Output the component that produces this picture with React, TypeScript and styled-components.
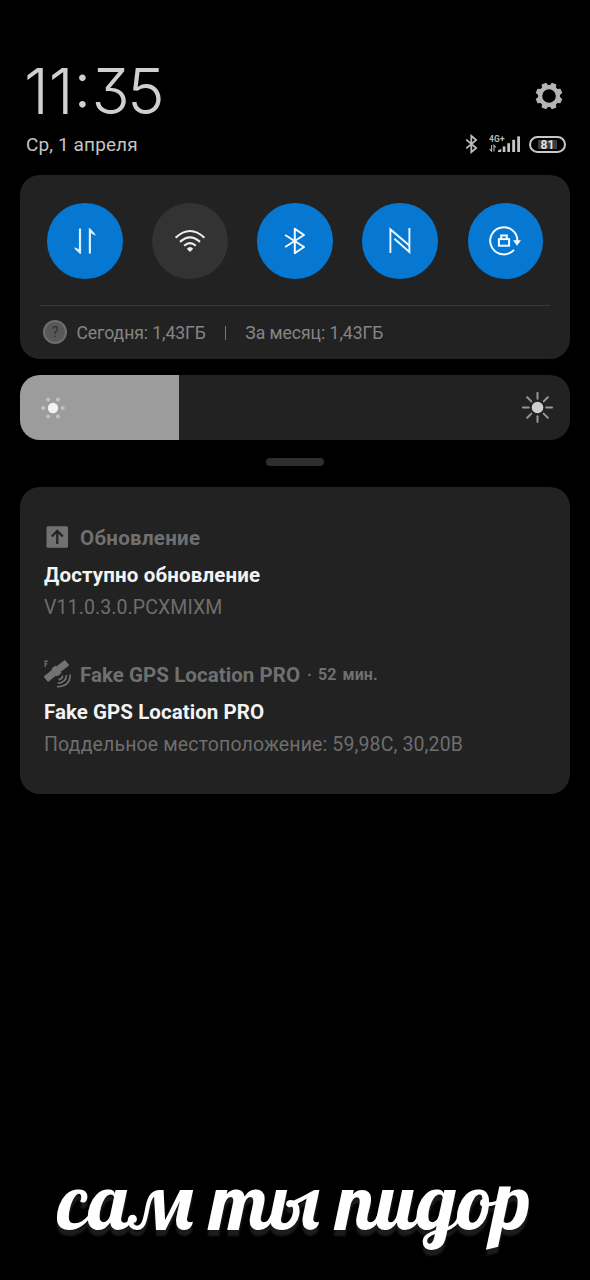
import React from 'react';
import styled, { createGlobalStyle } from 'styled-components';

const GlobalStyle = createGlobalStyle`
  * { box-sizing: border-box; }
  body { margin: 0; background: #000; }
  svg { display: block; flex: none; }
`;

const Screen = styled.main`
  width: 590px;
  height: 1280px;
  padding: 60px 20px 0;
  display: flex;
  flex-direction: column;
  overflow: hidden;
  background: #000;
  color: #c4c4c4;
  font-family: Roboto, "Liberation Sans", sans-serif;
`;

const Header = styled.header`
  height: 115px;
  padding: 0 4px 0 6px;
  display: flex;
  justify-content: space-between;
`;

const HeaderLeft = styled.div`
  display: flex;
  flex-direction: column;
`;

const HeaderRight = styled.div`
  display: flex;
  flex-direction: column;
  align-items: flex-end;
  padding-top: 22px;
`;

const Clock = styled.div`
  height: 62px;
  margin-left: -2px;
  font-family: Inter, Roboto, sans-serif;
  font-size: 63px;
  line-height: 62px;
  font-weight: 300;
  font-feature-settings: "cv09" 1;
  white-space: nowrap;
  color: #d0d0d0;
`;

const Digits = styled.span<{ $track: number }>`
  letter-spacing: ${p => p.$track}px;
`;

const DateText = styled.div`
  margin-top: 11px;
  font-size: 19px;
  line-height: 24px;
  letter-spacing: 0.12px;
  white-space: nowrap;
`;

const GearSlot = styled.div`
  margin-right: 3px;
`;

const StatusRow = styled.div`
  display: flex;
  align-items: center;
  height: 20px;
  margin-top: 24px;
`;

const Network = styled.div`
  width: 32px;
  margin: 0 8px 0 11px;
`;

const Battery = styled.div`
  width: 37px;
  height: 17px;
  padding: 2px 7px;
  border: 2px solid #c8c8c8;
  border-radius: 9px;
`;

const BatteryLevel = styled.div`
  height: 9px;
  background: #3c3c3c;
  color: #e2e2e2;
  font-size: 12px;
  line-height: 10px;
  font-weight: 700;
  text-align: center;
`;

const Panel = styled.section`
  height: 184px;
  padding: 28px 20px 0;
  border-radius: 20px;
  background: #222;
`;

const Toggles = styled.div`
  display: flex;
  justify-content: space-between;
  padding: 0 7px;
`;

const Toggle = styled.div<{ $on?: boolean }>`
  width: 75.5px;
  height: 75.5px;
  border-radius: 50%;
  display: flex;
  align-items: center;
  justify-content: center;
  background: ${p => (p.$on ? '#0678d1' : '#333')};
`;

const Usage = styled.div`
  display: flex;
  align-items: center;
  height: 53px;
  margin-top: 26.5px;
  padding-left: 3px;
  border-top: 1px solid #383838;
  color: #858585;
  font-size: 17.6px;
  white-space: nowrap;
`;

const UsageText = styled.span<{ $left: number; $track: number }>`
  margin-left: ${p => p.$left}px;
  padding-top: 1px;
  letter-spacing: ${p => p.$track}px;
`;

const Divider = styled.span`
  width: 1.5px;
  height: 14px;
  margin: 1px 0 0 19px;
  background: #777;
`;

const Brightness = styled.section`
  height: 65px;
  margin-top: 16px;
  display: flex;
  justify-content: space-between;
  align-items: center;
  padding-right: 17px;
  border-radius: 20px;
  overflow: hidden;
  background: #222;
`;

const BrightnessFill = styled.div`
  width: 159px;
  height: 100%;
  padding-left: 18.5px;
  display: flex;
  align-items: center;
  background: #9c9c9c;
`;

const Handle = styled.div`
  width: 58px;
  height: 8px;
  margin: 18px auto 21px;
  border-radius: 4px;
  background: #2e2e2e;
`;

const Notifications = styled.section`
  height: 307px;
  padding: 37px 24px 0;
  border-radius: 20px;
  background: #222;
`;

const Notice = styled.article`
  height: 137px;
  white-space: nowrap;
`;

const AppRow = styled.div`
  display: flex;
  align-items: center;
  height: 26px;
  color: #707070;
  font-size: 20.5px;
  font-weight: 700;
`;

const AppName = styled.span<{ $track: number }>`
  margin-left: 8px;
  padding-top: 1px;
  letter-spacing: ${p => p.$track}px;
`;

const Age = styled.span`
  margin-left: 7px;
  font-size: 16px;
  letter-spacing: 0.05px;
  word-spacing: 2px;
`;

const Title = styled.h2<{ $track: number }>`
  margin: 13px 0 0;
  color: #f3f3f3;
  font-size: 20.5px;
  line-height: 24px;
  font-weight: 700;
  letter-spacing: ${p => p.$track}px;
`;

const Detail = styled.p<{ $track: number }>`
  margin: 9px 0 0;
  color: #6e6e6e;
  font-size: 19.5px;
  line-height: 24px;
  letter-spacing: ${p => p.$track}px;
`;

const Caption = styled.div`
  margin: 356px 0 0 38px;
  color: #fff;
  font-family: Lobster, "Liberation Serif", serif;
  font-size: 80px;
  font-weight: 400;
  line-height: 100px;
  white-space: nowrap;
  text-shadow: 0 6px 2px #1c1c1c;
`;

const teeth = Array.from({ length: 8 }, (_, i) => i * 45 + 22.5);

const Gear = () => (
  <svg width="28" height="28" viewBox="-14 -14 28 28">
    <circle r="8.9" fill="none" stroke="#b4b4b4" strokeWidth="4.2" />
    {teeth.map(a => (
      <path key={a} d="M-3.4-10 L-2.4-13.4 H2.4 L3.4-10Z" fill="#b4b4b4" transform={`rotate(${a})`} />
    ))}
  </svg>
);

const StatusBluetooth = () => (
  <svg width="13" height="20" viewBox="0 0 13 20" fill="none" stroke="#bbb" strokeWidth="1.8">
    <path d="M1.2 5.6 11.2 14 6.3 18.2V1.8L11.2 6 1.2 14.4" />
  </svg>
);

const Signal = () => (
  <svg width="32" height="20" viewBox="0 0 32 20">
    <text x="0" y="7.7" fill="#bbb" fontFamily="Roboto, sans-serif" fontSize="8.4" fontWeight="700" textLength="15.5">4G+</text>
    <g fill="none" stroke="#aaa" strokeWidth="1.2">
      <path d="M2.6 11V17L.6 15M5 17.5V11.4L7 13.4" />
    </g>
    <g fill="#c4c4c4">
      <path d="M9 18V16.5L12.2 14.8V18Z" />
      <rect x="13.7" y="12.4" width="2.7" height="5.6" />
      <rect x="18.3" y="9.2" width="2.7" height="8.8" />
      <rect x="23.2" y="5.8" width="2.9" height="12.2" />
      <rect x="28.2" y="2.4" width="2.8" height="15.6" />
    </g>
  </svg>
);

const DataIcon = () => (
  <svg width="22" height="26" viewBox="0 0 22 26" fill="#d9efff">
    <path d="M4.9.5H7.1V25.8H5.8L.6 20.7V19.2L4.9 21.2Z" />
    <path d="M14.8 25.5V.2H16.1L21.3 6.2V7.7L17 5.3V25.5Z" />
  </svg>
);

const WifiIcon = () => (
  <svg width="32" height="24" viewBox="0 0 32 24" fill="none" stroke="#ededed" strokeWidth="2.1">
    <path d="M1.6 8.8Q16-4.8 30.4 8.8" />
    <path d="M6 12.9Q16 3.8 26 12.9" />
    <path d="M10.2 16.8Q16 11.6 21.8 16.8" />
    <path d="M12.8 19.7Q16 16.4 19.2 19.7L16 23Z" fill="#ededed" stroke="none" />
  </svg>
);

const BluetoothIcon = () => (
  <svg width="22" height="28" viewBox="0 0 22 28" fill="none" stroke="#f2faff" strokeWidth="2" strokeLinejoin="round">
    <path d="M1.2 8 20 20 10.8 26.2V1.8L20 8 1.2 20" />
  </svg>
);

const NfcIcon = () => (
  <svg width="22" height="27" viewBox="0 0 22 27" fill="none" stroke="#edf8ff" strokeWidth="1.9">
    <path d="M1.4 26V2.4L20.4 18.4" />
    <path d="M5.4 11.8 20.4 25V1" />
  </svg>
);

const RotationLockIcon = () => (
  <svg width="34" height="32" viewBox="0 0 34 32" fill="none" stroke="#f2faff" strokeWidth="2">
    <path d="M29.4 16A13.6 13.6 0 1 0 26 24.8" />
    <path d="M25 15.2H33L29 20.8Z" fill="#f2faff" stroke="none" />
    <rect x="10.9" y="14.1" width="10.2" height="6.6" />
    <path d="M13.2 14V10.6H18.8V14" />
  </svg>
);

const HelpIcon = () => (
  <svg width="24" height="24" viewBox="0 0 24 24">
    <circle cx="12" cy="12" r="11" fill="#585858" stroke="#6e6e6e" strokeWidth="2" />
    <text x="12" y="17" textAnchor="middle" fill="#303030" fontFamily="Roboto, sans-serif" fontSize="14">?</text>
  </svg>
);

const LowSun = () => (
  <svg width="28" height="26" viewBox="-14 -13 28 26">
    <circle r="5.2" fill="#f2f2f2" />
    {[0, 60, 120, 180, 240, 300].map(a => (
      <circle key={a} cx="9.8" r="2" fill="#c2c2c2" transform={`rotate(${a})`} />
    ))}
  </svg>
);

const HighSun = () => (
  <svg width="32" height="32" viewBox="-16.5 -15.5 32 32">
    <circle r="5.8" fill="#cecece" />
    {[0, 45, 90, 135, 180, 225, 270, 315].map(a => (
      <path key={a} d="M8.7 0H14.6" stroke="#969696" strokeWidth="2" strokeLinecap="round" transform={`rotate(${a})`} />
    ))}
  </svg>
);

const UpdateIcon = () => (
  <svg width="28" height="26" viewBox="0 0 28 26">
    <rect x="2.5" y="2.3" width="21.5" height="21.5" rx="1.5" fill="#717171" />
    <path d="M13.3 20V7.5M7.8 12.5 13.3 7 18.8 12.5" fill="none" stroke="#242424" strokeWidth="2.3" />
  </svg>
);

const SatelliteIcon = () => (
  <svg width="28" height="28" viewBox="0 0 28 28">
    <g transform="rotate(-38 12.5 11)" fill="#737373">
      <rect x="-1" y="7.4" width="10.5" height="7" />
      <rect x="15.5" y="7.4" width="10.5" height="7" />
      <rect x="8" y="8.6" width="9" height="4.6" />
      <rect x="9.2" y="6" width="6.6" height="9.8" rx="2" />
    </g>
    <path d="M1.2 7V1.2H4.2M1.2 3.8H3.4" fill="none" stroke="#737373" strokeWidth="1.2" />
    <g fill="none" stroke="#737373" strokeWidth="1.6">
      <path d="M18.5 15.5Q18.8 19 14.5 19.6" />
      <path d="M22.3 15Q22.5 22.5 13.8 23.2" />
      <path d="M26 14.5Q26.8 26 13 26.8" />
    </g>
  </svg>
);

export default function App() {
  return (
    <Screen>
      <GlobalStyle />
      <Header>
        <HeaderLeft>
          <Clock>
            <Digits $track={0}>11:</Digits>
            <Digits $track={-2.5}>35</Digits>
          </Clock>
          <DateText>Ср, 1 апреля</DateText>
        </HeaderLeft>
        <HeaderRight>
          <GearSlot><Gear /></GearSlot>
          <StatusRow>
            <StatusBluetooth />
            <Network><Signal /></Network>
            <Battery><BatteryLevel>81</BatteryLevel></Battery>
          </StatusRow>
        </HeaderRight>
      </Header>

      <Panel>
        <Toggles>
          <Toggle $on><DataIcon /></Toggle>
          <Toggle><WifiIcon /></Toggle>
          <Toggle $on><BluetoothIcon /></Toggle>
          <Toggle $on><NfcIcon /></Toggle>
          <Toggle $on><RotationLockIcon /></Toggle>
        </Toggles>
        <Usage>
          <HelpIcon />
          <UsageText $left={9.5} $track={-0.08}>Сегодня: 1,43ГБ</UsageText>
          <Divider />
          <UsageText $left={19} $track={-0.04}>За месяц: 1,43ГБ</UsageText>
        </Usage>
      </Panel>

      <Brightness>
        <BrightnessFill><LowSun /></BrightnessFill>
        <HighSun />
      </Brightness>

      <Handle />

      <Notifications>
        <Notice>
          <AppRow>
            <UpdateIcon />
            <AppName $track={0.3}>Обновление</AppName>
          </AppRow>
          <Title $track={0.17}>Доступно обновление</Title>
          <Detail $track={0.1}>V11.0.3.0.PCXMIXM</Detail>
        </Notice>
        <Notice>
          <AppRow>
            <SatelliteIcon />
            <AppName $track={0.05}>Fake GPS Location PRO</AppName>
            <Age>· 52 мин.</Age>
          </AppRow>
          <Title $track={0.05}>Fake GPS Location PRO</Title>
          <Detail $track={0.13}>Поддельное местоположение: 59,98С, 30,20В</Detail>
        </Notice>
      </Notifications>

      <Caption>сам ты пидор</Caption>
    </Screen>
  );
}
